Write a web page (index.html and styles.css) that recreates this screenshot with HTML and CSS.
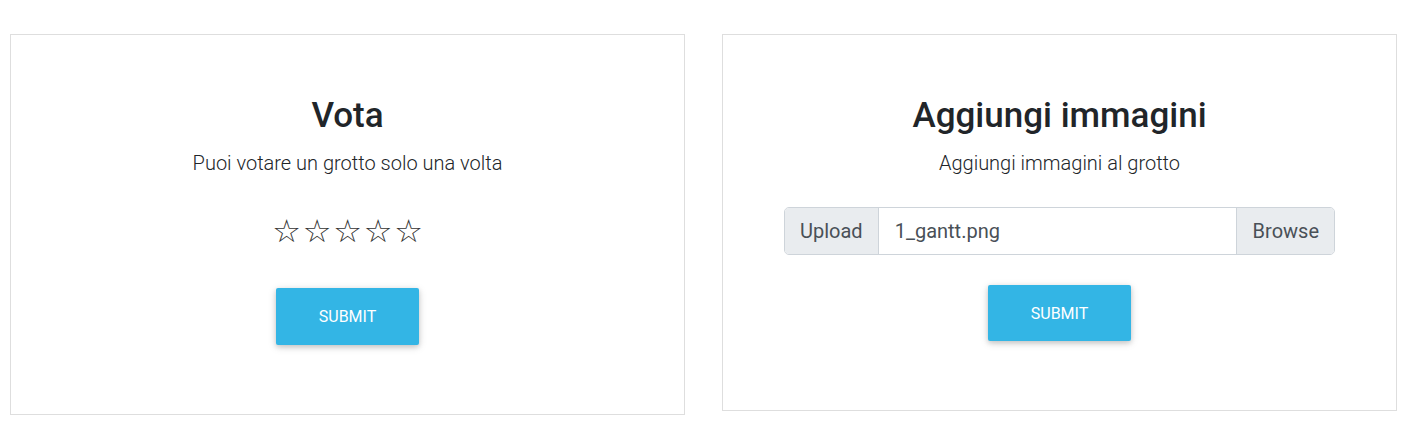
FILE: index.html
```html
<!DOCTYPE html>
<html lang="it">
<head>
<meta charset="utf-8">
<title>Grotto</title>
<link rel="stylesheet" href="styles.css">
</head>
<body>
<div class="row">
  <section class="card card-vote">
    <h2 class="title">Vota</h2>
    <p class="lead">Puoi votare un grotto solo una volta</p>
    <div class="stars">
      <span class="star">☆</span><span class="star">☆</span><span class="star">☆</span><span class="star">☆</span><span class="star">☆</span>
    </div>
    <button class="btn">SUBMIT</button>
  </section>
  <section class="card card-upload">
    <h2 class="title">Aggiungi immagini</h2>
    <p class="lead">Aggiungi immagini al grotto</p>
    <div class="input-group">
      <span class="addon addon-left">Upload</span>
      <span class="file-name">1_gantt.png</span>
      <span class="addon addon-right">Browse</span>
    </div>
    <button class="btn">SUBMIT</button>
  </section>
</div>
</body>
</html>
```
FILE: styles.css
```css
* { box-sizing: border-box; }
html, body { margin: 0; padding: 0; background: #fff; }
body {
  font-family: Roboto, "Liberation Sans", sans-serif;
  color: #212529;
}
.row {
  display: grid;
  grid-template-columns: 675px 675px;
  column-gap: 37px;
  padding: 34px 0 0 10px;
  align-items: start;
}
.card {
  border: 1px solid #dedede;
  display: flex;
  flex-direction: column;
  align-items: center;
  padding: 60px 20px 69px;
}
.title {
  margin: 0 0 11px;
  font-size: 35px;
  line-height: 1.2;
  font-weight: 500;
  color: #212529;
}
.lead {
  margin: 0;
  font-size: 20px;
  line-height: 30px;
  font-weight: 300;
  color: #212529;
}
.stars {
  margin-top: 33px;
  height: 40px;
  display: flex;
  align-items: center;
  font-family: "DejaVu Sans", sans-serif;
  font-size: 32px;
  line-height: 40px;
  color: #333;
}
.star { display: block; width: 30.5px; text-align: center; }
.btn {
  margin-top: 37px;
  width: 143px;
  height: 57px;
  border: 0;
  border-radius: 2px;
  background: #33b5e5;
  color: #fff;
  font-family: Roboto, "Liberation Sans", sans-serif;
  font-size: 16px;
  font-weight: 400;
  box-shadow: 0 2px 5px 0 rgba(0,0,0,.16), 0 2px 10px 0 rgba(0,0,0,.12);
}
.card-upload .btn { margin-top: 30px; height: 56px; }
.input-group {
  margin-top: 29px;
  width: 551px;
  height: 48px;
  display: flex;
  border: 1px solid #ced4da;
  border-radius: 5px;
  font-size: 20px;
  line-height: 30px;
  overflow: hidden;
}
.addon {
  background: #e9ecef;
  color: #495057;
  padding: 8px 15px;
}
.addon-left { border-right: 1px solid #ced4da; }
.addon-right { border-left: 1px solid #ced4da; padding: 8px 15px 8px 16px; }
.file-name {
  flex: 1;
  padding: 8px 16px;
  color: #495057;
  background: #fff;
}
```
